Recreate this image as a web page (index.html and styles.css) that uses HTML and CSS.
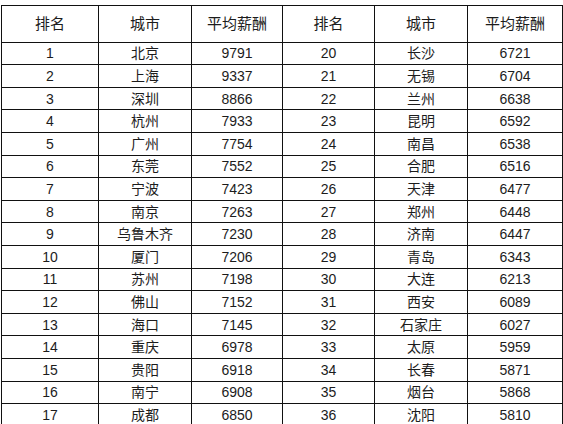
FILE: index.html
```html
<!DOCTYPE html>
<html lang="zh-CN">
<head>
<meta charset="utf-8">
<title>城市平均薪酬排名</title>
<link rel="stylesheet" href="styles.css">
</head>
<body>
<div class="sheet" role="table">
  <div class="cell head">排名</div><div class="cell head">城市</div><div class="cell head">平均薪酬</div><div class="cell head">排名</div><div class="cell head">城市</div><div class="cell head">平均薪酬</div>
  <div class="cell">1</div><div class="cell">北京</div><div class="cell">9791</div><div class="cell">20</div><div class="cell">长沙</div><div class="cell">6721</div>
  <div class="cell">2</div><div class="cell">上海</div><div class="cell">9337</div><div class="cell">21</div><div class="cell">无锡</div><div class="cell">6704</div>
  <div class="cell">3</div><div class="cell">深圳</div><div class="cell">8866</div><div class="cell">22</div><div class="cell">兰州</div><div class="cell">6638</div>
  <div class="cell">4</div><div class="cell">杭州</div><div class="cell">7933</div><div class="cell">23</div><div class="cell">昆明</div><div class="cell">6592</div>
  <div class="cell">5</div><div class="cell">广州</div><div class="cell">7754</div><div class="cell">24</div><div class="cell">南昌</div><div class="cell">6538</div>
  <div class="cell">6</div><div class="cell">东莞</div><div class="cell">7552</div><div class="cell">25</div><div class="cell">合肥</div><div class="cell">6516</div>
  <div class="cell">7</div><div class="cell">宁波</div><div class="cell">7423</div><div class="cell">26</div><div class="cell">天津</div><div class="cell">6477</div>
  <div class="cell">8</div><div class="cell">南京</div><div class="cell">7263</div><div class="cell">27</div><div class="cell">郑州</div><div class="cell">6448</div>
  <div class="cell">9</div><div class="cell">乌鲁木齐</div><div class="cell">7230</div><div class="cell">28</div><div class="cell">济南</div><div class="cell">6447</div>
  <div class="cell">10</div><div class="cell">厦门</div><div class="cell">7206</div><div class="cell">29</div><div class="cell">青岛</div><div class="cell">6343</div>
  <div class="cell">11</div><div class="cell">苏州</div><div class="cell">7198</div><div class="cell">30</div><div class="cell">大连</div><div class="cell">6213</div>
  <div class="cell">12</div><div class="cell">佛山</div><div class="cell">7152</div><div class="cell">31</div><div class="cell">西安</div><div class="cell">6089</div>
  <div class="cell">13</div><div class="cell">海口</div><div class="cell">7145</div><div class="cell">32</div><div class="cell">石家庄</div><div class="cell">6027</div>
  <div class="cell">14</div><div class="cell">重庆</div><div class="cell">6978</div><div class="cell">33</div><div class="cell">太原</div><div class="cell">5959</div>
  <div class="cell">15</div><div class="cell">贵阳</div><div class="cell">6918</div><div class="cell">34</div><div class="cell">长春</div><div class="cell">5871</div>
  <div class="cell">16</div><div class="cell">南宁</div><div class="cell">6908</div><div class="cell">35</div><div class="cell">烟台</div><div class="cell">5868</div>
  <div class="cell">17</div><div class="cell">成都</div><div class="cell">6850</div><div class="cell">36</div><div class="cell">沈阳</div><div class="cell">5810</div>
</div>
</body>
</html>
```
FILE: styles.css
```css
html, body {
  margin: 0;
  padding: 0;
  background: #fff;
  overflow: hidden;
}

.sheet {
  margin: 5px 0 0 1px;
  width: 562px;
  box-sizing: border-box;
  display: grid;
  grid-template-columns: 96px 92px 90px 91px 92px 94px;
  grid-template-rows: 35.7px;
  grid-auto-rows: 21.6px;
  gap: 1px;
  padding: 1px;
  background: #111;
  font-family: "Liberation Sans", "Noto Sans CJK SC", sans-serif;
  color: #1c1c1c;
}

.cell {
  background: #fff;
  display: flex;
  align-items: center;
  justify-content: center;
  font-size: 14px;
  line-height: 1;
  white-space: nowrap;
}

.head {
  font-size: 15px;
}
```
